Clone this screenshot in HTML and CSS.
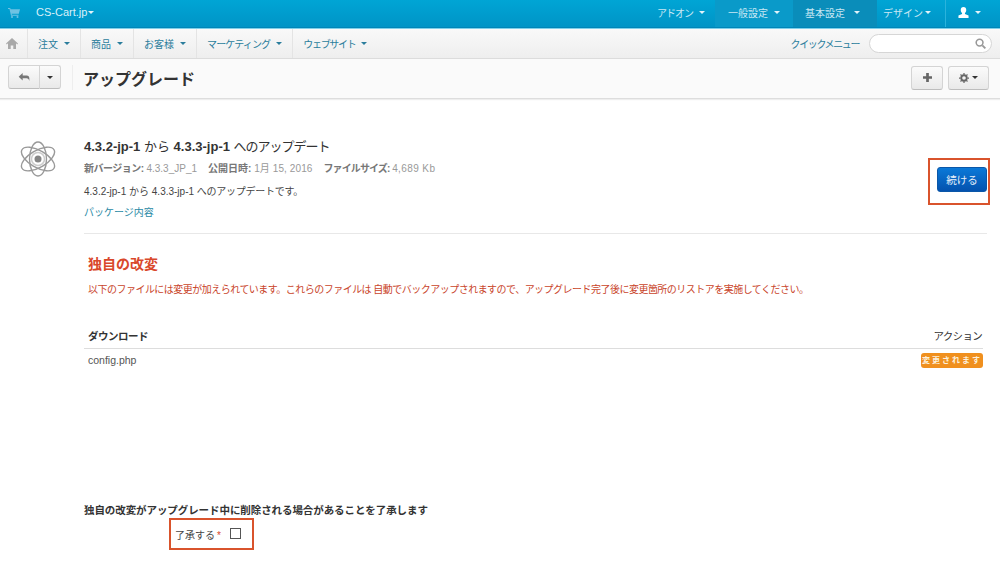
FILE: index.html
```html
<!DOCTYPE html>
<html lang="ja">
<head>
<meta charset="utf-8">
<title>アップグレード</title>
<link rel="stylesheet" href="styles.css">
</head>
<body>
<header class="topbar">
  <div class="brand">
    <svg class="cart" viewBox="0 0 12 11" width="12" height="11"><path d="M0 1h2.200l.4 1.200H12l-1.200 4.600H3.600l.3 1h6.600v1H3L1.500 2H0z" fill="#6fc3e3"/><circle cx="4" cy="10" r="1" fill="#6fc3e3"/><circle cx="9.500" cy="10" r="1" fill="#6fc3e3"/></svg>
    <span class="brand-name">CS-Cart.jp</span><i class="caret caret-white caret-tight"></i>
  </div>
  <nav class="topnav">
    <a class="topitem top-addon"><span class="kana-s">アドオン</span><i class="caret caret-white"></i></a>
    <a class="topitem top-general">一般設定<i class="caret caret-white"></i></a>
    <a class="topitem top-basic">基本設定<i class="caret caret-white"></i></a>
    <a class="topitem top-design">デザイン<i class="caret caret-white"></i></a>
    <a class="topitem user">
      <svg viewBox="0 0 12 12" width="11" height="11"><path d="M6 0c2 0 3 1.400 3 3.400 0 1.400-.6 2.600-1.400 3.200v1l3.900 1.700V12H.5V9.300l3.900-1.700v-1C3.600 6 3 4.800 3 3.400 3 1.400 4 0 6 0z" fill="#fff"/></svg>
      <i class="caret caret-white"></i>
    </a>
  </nav>
</header>

<div class="subnav">
  <div class="subleft">
    <a class="home">
      <svg viewBox="0 0 12 11" width="12" height="11"><path d="M6 0l6 5.600-.8.800L10 5.300V11H7.300V7.500H4.700V11H2V5.300L.8 6.400 0 5.600z" fill="#a9a9a9"/></svg>
    </a>
    <a class="subitem">注文<i class="caret caret-blue"></i></a>
    <a class="subitem">商品<i class="caret caret-blue"></i></a>
    <a class="subitem">お客様<i class="caret caret-blue"></i></a>
    <a class="subitem"><span class="kana-m">マーケティング</span><i class="caret caret-blue"></i></a>
    <a class="subitem"><span class="kana-l">ウェブサイト</span><i class="caret caret-blue"></i></a>
  </div>
  <div class="subright">
    <a class="quick">クイックメニュー</a>
    <div class="search">
      <svg viewBox="0 0 12 12" width="11" height="11"><circle cx="5" cy="5" r="3.700" fill="none" stroke="#999" stroke-width="1.700"/><path d="M8 8l3.300 3.300" stroke="#999" stroke-width="2"/></svg>
    </div>
  </div>
</div>

<div class="toolbar">
  <div class="btn-group">
    <button class="tool tool-back"><svg viewBox="0 0 12 9" width="12" height="8"><path d="M4.500 0v2.800H9c2 0 3 1.200 3 3.200v3c-.5-2-1.500-3-3-3H4.500v2.500L0 4.200z" fill="#777"/></svg></button>
    <button class="tool tool-drop"><i class="caret caret-dark"></i></button>
  </div>
  <h1 class="page-title">アップグレード</h1>
  <div class="tool-right">
    <button class="tool tool-plus"><svg viewBox="0 0 10 10" width="9" height="9"><path d="M3.500 0h3v3.500H10v3H6.500V10h-3V6.500H0v-3h3.500z" fill="#666"/></svg></button>
    <button class="tool tool-gear"><svg viewBox="0 0 12 12" width="10" height="10"><circle cx="6" cy="6" r="3.300" fill="none" stroke="#666" stroke-width="2.200"/><path d="M6 0v12M0 6h12M1.800 1.800l8.400 8.400M10.200 1.800l-8.400 8.400" stroke="#666" stroke-width="1.500" stroke-dasharray="2 8"/></svg><i class="caret caret-dark"></i></button>
  </div>
</div>

<main class="content">
  <section class="update">
    <svg class="atom" viewBox="0 0 36 36" width="36" height="36">
      <g fill="none" stroke="#999" stroke-width="1.400">
        <ellipse cx="18" cy="18" rx="8.500" ry="17"/>
        <ellipse cx="18" cy="18" rx="8.500" ry="18.500" transform="rotate(60 18 18)"/>
        <ellipse cx="18" cy="18" rx="8.500" ry="18.500" transform="rotate(120 18 18)"/>
      </g>
      <circle cx="18" cy="18" r="6.500" fill="none" stroke="#ccc" stroke-width="1.500"/>
      <circle cx="18" cy="18" r="3.500" fill="#858585"/>
    </svg>
    <div class="update-body">
      <div class="update-text">
        <h2 class="update-title"><b>4.3.2-jp-1</b> から <b>4.3.3-jp-1</b> <span class="kana-title">へのアップデート</span></h2>
        <p class="meta"><b class="kana-label">新バージョン:</b> 4.3.3_JP_1<b class="meta-gap">公開日時:</b> <span class="meta-date">1月 15, 2016</span><b class="meta-gap kana-size">ファイルサイズ:</b> <span class="meta-file">4,689 Kb</span></p>
        <p class="desc">4.3.2-jp-1 から 4.3.3-jp-1 <span class="kana-desc">へのアップデートです。</span></p>
        <a class="pkg">パッケージ内容</a>
      </div>
      <div class="mark mark-continue"><button class="continue">続ける</button></div>
    </div>
  </section>

  <section class="changes">
    <h3 class="changes-title">独自の改変</h3>
    <p class="changes-note">以下のファイルには変更が加えられています。これらのファイルは 自動でバックアップされますので、アップグレード完了後に変更箇所のリストアを実施してください。</p>
    <div class="table-head"><span class="col-download">ダウンロード</span><span class="col-action">アクション</span></div>
    <div class="table-row"><span class="file">config.php</span><span class="badge">変更されます</span></div>
  </section>

  <section class="agree">
    <p class="agree-text">独自の改変がアップグレード中に削除される場合があることを了承します</p>
    <div class="mark mark-agree">
      <label class="agree-label">了承する<span class="req">*</span></label>
      <span class="checkbox"></span>
    </div>
  </section>
</main>
</body>
</html>
```
FILE: styles.css
```css
* { box-sizing: border-box; }
html, body { margin: 0; padding: 0; }
body {
  width: 1000px;
  height: 565px;
  overflow: hidden;
  background: #fff;
  color: #333;
  font-family: "Liberation Sans", "Noto Sans CJK JP", sans-serif;
  font-size: 11px;
}
p, h1, h2, h3 { margin: 0; }
a { cursor: pointer; }

.kana-s { letter-spacing: -1px; }
.kana-m { letter-spacing: -0.85px; }
.kana-l { letter-spacing: -1.3px; }

.caret { display: inline-block; flex: none; width: 0; height: 0; margin-left: 6px; border-left: 3px solid transparent; border-right: 3px solid transparent; border-top: 3px solid #fff; vertical-align: middle; }
.caret-white { border-top-color: #e2f3fa; }
.caret-tight { margin-left: 1px; }
.caret-blue { border-top-color: #2a7d9c; }
.caret-dark { border-top-color: #333; margin-left: 0; }

.topbar { height: 28px; display: flex; justify-content: space-between; background: linear-gradient(#00a5d5, #0094c6); border-bottom: 1px solid #0086b8; color: #d4edf7; }
.brand { display: flex; align-items: center; padding: 0 0 3px 8px; }
.cart { margin-right: 16px; }
.brand-name { font-size: 11px; color: #d9f0f9; }
.topnav { display: flex; }
.topitem { display: flex; align-items: center; height: 27px; padding-bottom: 3px; font-size: 10px; white-space: nowrap; color: #c9e8f4; }
.top-addon { width: 70px; padding-left: 12px; }
.top-general { width: 78px; padding-left: 13px; background: #0a9ac9; }
.top-basic { width: 84px; padding-left: 12px; background: #0a8dba; }
.top-design { width: 68px; padding-left: 6px; }
.top-basic .caret { margin-left: 9px; }
.top-design .caret { margin-left: 2px; }
.topitem.user { width: 55px; padding-left: 12px; border-left: 1px solid #2bb3dc; }

.subnav { height: 31px; display: flex; justify-content: space-between; align-items: stretch; background: linear-gradient(#f9f9f9, #eeeeee); border-top: 1px solid #7fd0ea; border-bottom: 1px solid #dcdcdc; }
.subleft { display: flex; }
.home { display: flex; align-items: center; width: 28px; padding: 0 0 1px 6px; border-right: 1px solid #e4e4e4; }
.subitem { display: flex; align-items: center; padding: 0 10px 1px 10px; font-size: 10px; color: #2a7d9c; border-right: 1px solid #e4e4e4; white-space: nowrap; }
.subitem:first-of-type { padding-left: 11px; }
.subitem:last-child { border-right: 0; }
.subright { display: flex; align-items: center; }
.quick { font-size: 10px; letter-spacing: -1.4px; color: #2a7d9c; margin-right: 10px; }
.search { width: 123px; height: 19px; margin-right: 8px; display: flex; align-items: center; justify-content: flex-end; padding-right: 5px; background: #fff; border: 1px solid #d6d6d6; border-radius: 10px; }

.toolbar { height: 40px; display: flex; align-items: center; padding: 0 11px 2px 8px; background: #fafafa; border-bottom: 1px solid #dddddd; box-shadow: 0 1px 1px #eeeeee; }
.btn-group { display: flex; margin-right: 10px; padding-right: 11px; border-right: 1px solid #eeeeee; height: 25px; }
.tool { height: 24px; padding: 0; display: inline-flex; align-items: center; justify-content: center; background: linear-gradient(#fbfbfb, #e9e9e9); border: 1px solid #d4d4d4; border-bottom-color: #bdbdbd; border-radius: 3px; }
.tool-back { width: 32px; border-radius: 3px 0 0 3px; }
.tool-drop { width: 21px; border-left: 0; border-radius: 0 3px 3px 0; }
.page-title { font-size: 16px; font-weight: bold; color: #333; }
.tool-right { margin-left: auto; display: flex; gap: 5px; }
.tool-plus { width: 32px; }
.tool-gear { width: 41px; gap: 3px; }

.content { padding: 0 13px 0 20px; }
.update { display: flex; gap: 28px; padding-top: 41px; }
.atom { flex: none; margin-top: 1px; }
.update-body { flex: 1; display: flex; justify-content: space-between; height: 94px; border-bottom: 1px solid #e8e8e8; }
.update-title { font-size: 13px; font-weight: normal; line-height: 16px; margin-top: -1px; color: #333; }
.kana-title { letter-spacing: -1px; }
.meta { font-size: 10px; line-height: 14px; margin-top: 7px; color: #999; }
.meta b { color: #777; }
.kana-label { letter-spacing: -0.5px; }
.kana-size { letter-spacing: -0.9px; }
.meta-gap { margin-left: 11px; }
.meta-date { letter-spacing: 0.1px; }
.meta-file { letter-spacing: 0.4px; }
.desc { font-size: 10px; line-height: 14px; margin-top: 9px; color: #444; }
.kana-desc { letter-spacing: -0.25px; }
.pkg { display: block; font-size: 10px; line-height: 14px; margin-top: 7px; color: #2a8aa5; }
.mark { border: 2px solid #d9532c; }
.mark-continue { width: 62px; height: 47px; margin: 18px -3px 0 0; display: flex; align-items: center; padding: 0 0 4px 7px; }
.continue { width: 50px; height: 25px; padding: 0; border: 1px solid #0b57a8; border-radius: 3px; background: linear-gradient(#0a79d8, #0452ae); color: #e6f0fa; font: 10.500px "Liberation Sans", "Noto Sans CJK JP", sans-serif; }

.changes { padding: 22px 4px 0 68px; }
.changes-title { font-size: 14px; font-weight: bold; line-height: 16px; color: #d9482b; }
.changes-note { font-size: 10px; letter-spacing: -0.52px; line-height: 14px; margin-top: 11px; color: #c9442a; white-space: nowrap; }
.table-head { display: flex; justify-content: space-between; margin: 32px 0 0 -4px; padding: 0 1px 5px 4px; font-size: 10.500px; line-height: 14px; color: #333; border-bottom: 1px solid #dddddd; }
.col-download { font-weight: bold; letter-spacing: -0.5px; }
.col-action { letter-spacing: -0.7px; }
.table-row { display: flex; justify-content: space-between; align-items: center; margin: 4px 0 0 -4px; padding-left: 4px; font-size: 10.500px; color: #555; }
.file { margin-top: -2px; }
.badge { width: 62px; height: 15px; line-height: 15px; border-radius: 3px; background: #f0901e; color: #fdf0dc; font-size: 8px; letter-spacing: 2px; text-align: center; font-weight: bold; }

.agree { padding-left: 64px; padding-top: 135px; }
.agree-text { font-size: 10.500px; letter-spacing: -0.08px; line-height: 14px; font-weight: bold; color: #333; }
.mark-agree { width: 85px; height: 32px; margin: 1px 0 0 85px; display: flex; align-items: center; padding-left: 4px; }
.agree-label { font-size: 10px; color: #444; }
.req { color: #d9482b; margin-left: 2px; }
.checkbox { width: 11px; height: 11px; margin-left: 9px; margin-top: -2px; border: 1px solid #555; background: #fff; }
```
